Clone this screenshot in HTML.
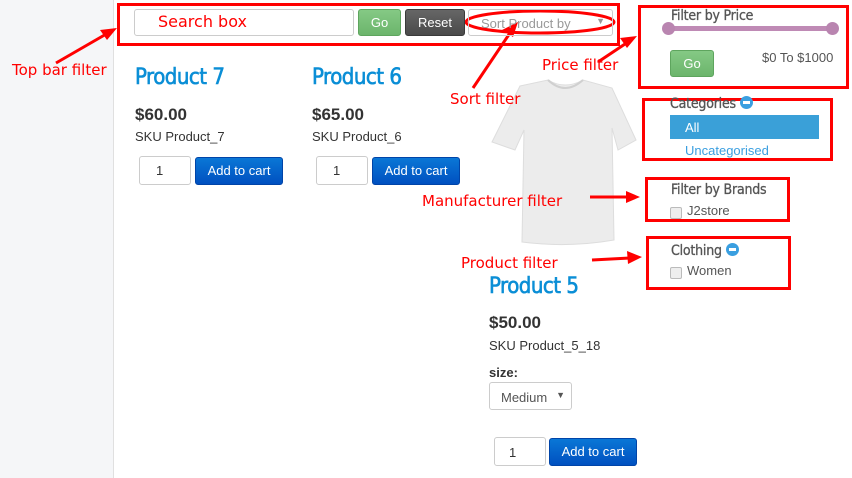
<!DOCTYPE html>
<html><head><meta charset="utf-8"><style>
*{margin:0;padding:0;box-sizing:border-box}
body{width:852px;height:478px;overflow:hidden;background:#fff;font-family:"Liberation Sans",sans-serif;position:relative}
.a{position:absolute}
.side{left:0;top:0;width:114px;height:478px;background:#f5f6f8;border-right:1px solid #e0e0e0}
.rb{border:3px solid #f00}
.red{color:#f00;font-family:"DejaVu Sans",sans-serif;font-size:15px;white-space:nowrap;z-index:3}
.inp{border:1px solid #ccc;border-radius:3px;background:#fff}
.btn{border-radius:3px;color:#fff;font-size:13px;text-align:center}
.go{background:linear-gradient(#85c985,#6cb56c);border:1px solid #5ea55e}
.cart{background:linear-gradient(#0a77d6,#0050c0);border:1px solid #0044a8}
.pt{color:#0a8ed6;font-family:"DejaVu Sans Condensed","DejaVu Sans",sans-serif;font-size:22px;letter-spacing:-0.5px;-webkit-text-stroke:0.6px #0a8ed6}
.pr{font-weight:bold;font-size:17px;color:#333}
.sku{font-size:13px;color:#333}
.h{font-family:"DejaVu Sans Condensed","DejaVu Sans",sans-serif;font-size:14px;color:#555;letter-spacing:-0.2px;-webkit-text-stroke:0.3px #555}
.cb{width:12px;height:12px;border:1px solid #bbb;border-radius:2px;background:#eee}
.min{display:inline-block;width:13px;height:13px;border-radius:50%;background:#3a9fe0;vertical-align:-1px;position:relative;-webkit-text-stroke:0}
.min:after{content:"";position:absolute;left:3px;top:5px;width:7px;height:3px;background:#fff}
</style></head><body>
<div class="a side"></div>

<svg class="a" style="left:0;top:0" width="852" height="478">
<g>
<path d="M520 86 L548 80 Q565 90 583 80 L612 88 L636 140 L618 150 L612 128 L614 240 Q568 248 522 242 L524 130 L515 150 L492 142 Z" fill="#ececec" stroke="#ddd"/>
<path d="M548 80 Q565 96 583 80" fill="none" stroke="#d0d0d0" stroke-width="2"/>
</g>
<ellipse cx="540" cy="22" rx="74" ry="11" fill="none" stroke="#f00" stroke-width="3"/>
<g stroke="#f00" stroke-width="3" fill="#f00">
<line x1="56" y1="63" x2="108" y2="33"/><polygon points="117,28 100,30 107,40" stroke="none"/>
<line x1="473" y1="88" x2="512" y2="30"/><polygon points="518,22 502,30 513,37" stroke="none"/>
<line x1="598" y1="62" x2="628" y2="42"/><polygon points="637,36 620,38 627,48" stroke="none"/>
<line x1="590" y1="197" x2="628" y2="197"/><polygon points="640,197 626,191 626,203" stroke="none"/>
<line x1="592" y1="260" x2="630" y2="258"/><polygon points="642,257 627,251 628,264" stroke="none"/>
</g>
</svg>

<div class="a rb" style="left:117px;top:3px;width:503px;height:43px"></div>
<div class="a inp" style="left:134px;top:9px;width:220px;height:27px"></div>
<div class="a red" style="left:158px;top:12px;font-size:16px">Search box</div>
<div class="a btn go" style="left:358px;top:9px;width:43px;height:27px;line-height:25px">Go</div>
<div class="a btn" style="left:405px;top:9px;width:60px;height:27px;line-height:25px;background:linear-gradient(#666,#4a4a4a);border:1px solid #3a3a3a">Reset</div>
<div class="a inp" style="left:468px;top:9px;width:145px;height:27px;font-size:13px;color:#999;padding:6px 0 0 12px;background:transparent">Sort Product by<span style="position:absolute;right:7px;top:6px;font-size:9px">▼</span></div>

<div class="a red" style="left:12px;top:61px">Top bar filter</div>
<div class="a red" style="left:542px;top:56px">Price filter</div>
<div class="a red" style="left:450px;top:90px">Sort filter</div>
<div class="a red" style="left:422px;top:192px">Manufacturer filter</div>
<div class="a red" style="left:461px;top:254px">Product filter</div>

<div class="a pt" style="left:135px;top:65px">Product 7</div>
<div class="a pr" style="left:135px;top:105px">$60.00</div>
<div class="a sku" style="left:135px;top:129px">SKU Product_7</div>
<div class="a inp" style="left:139px;top:156px;width:52px;height:29px;font-size:13px;padding:6px 0 0 16px;color:#333">1</div>
<div class="a btn cart" style="left:195px;top:157px;width:88px;height:28px;line-height:26px">Add to cart</div>

<div class="a pt" style="left:312px;top:65px">Product 6</div>
<div class="a pr" style="left:312px;top:105px">$65.00</div>
<div class="a sku" style="left:312px;top:129px">SKU Product_6</div>
<div class="a inp" style="left:316px;top:156px;width:52px;height:29px;font-size:13px;padding:6px 0 0 16px;color:#333">1</div>
<div class="a btn cart" style="left:372px;top:157px;width:88px;height:28px;line-height:26px">Add to cart</div>

<div class="a pt" style="left:489px;top:274px">Product 5</div>
<div class="a pr" style="left:489px;top:313px">$50.00</div>
<div class="a sku" style="left:489px;top:338px">SKU Product_5_18</div>
<div class="a" style="left:489px;top:365px;font-size:13px;font-weight:bold;color:#333">size:</div>
<div class="a inp" style="left:489px;top:382px;width:83px;height:28px;font-size:13px;color:#555;padding:7px 0 0 11px">Medium<span style="position:absolute;right:6px;top:7px;font-size:9px">▼</span></div>
<div class="a inp" style="left:494px;top:437px;width:52px;height:29px;font-size:13px;padding:7px 0 0 14px;color:#333">1</div>
<div class="a btn cart" style="left:549px;top:438px;width:88px;height:28px;line-height:26px">Add to cart</div>

<div class="a rb" style="left:638px;top:5px;width:211px;height:84px"></div>
<div class="a h" style="left:671px;top:8px">Filter by Price</div>
<div class="a" style="left:668px;top:26px;width:164px;height:5px;background:#bf8ab5"></div>
<div class="a" style="left:662px;top:22px;width:13px;height:13px;border-radius:50%;background:#b985b0"></div>
<div class="a" style="left:826px;top:22px;width:13px;height:13px;border-radius:50%;background:#b985b0"></div>
<div class="a btn go" style="left:670px;top:50px;width:44px;height:27px;line-height:25px">Go</div>
<div class="a sku" style="left:762px;top:50px;color:#555">$0 To $1000</div>

<div class="a rb" style="left:642px;top:98px;width:191px;height:63px"></div>
<div class="a h" style="left:670px;top:96px">Categories <span class="min"></span></div>
<div class="a" style="left:670px;top:115px;width:149px;height:24px;background:#3aa0d8;color:#fff;font-size:13px;padding:5px 0 0 15px">All</div>
<div class="a" style="left:685px;top:143px;font-size:13px;color:#3a9fe0">Uncategorised</div>

<div class="a rb" style="left:645px;top:177px;width:145px;height:45px"></div>
<div class="a h" style="left:671px;top:182px">Filter by Brands</div>
<div class="a cb" style="left:670px;top:207px"></div>
<div class="a sku" style="left:687px;top:203px;color:#555">J2store</div>

<div class="a rb" style="left:646px;top:236px;width:145px;height:54px"></div>
<div class="a h" style="left:671px;top:243px">Clothing <span class="min"></span></div>
<div class="a cb" style="left:670px;top:267px"></div>
<div class="a sku" style="left:687px;top:263px;color:#555">Women</div>
</body></html>
